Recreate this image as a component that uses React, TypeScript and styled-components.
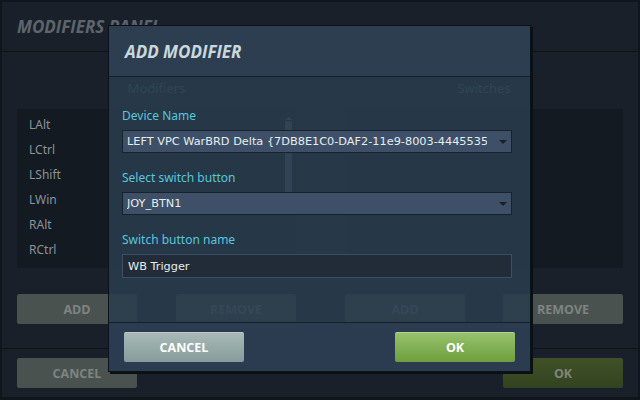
import React from 'react';
import styled, { createGlobalStyle } from 'styled-components';

const GlobalStyle = createGlobalStyle`
  html, body {
    margin: 0;
    padding: 0;
    background: #11161c;
    overflow: hidden;
  }
  * {
    box-sizing: border-box;
  }
`;

const MODIFIERS = ['LAlt', 'LCtrl', 'LShift', 'LWin', 'RAlt', 'RCtrl'];
const DEVICE = 'LEFT VPC WarBRD Delta {7DB8E1C0-DAF2-11e9-8003-444553540000}';

function App() {
  return (
    <Screen>
      <GlobalStyle />
      <Panel>
        <PanelHeader>
          <PanelTitle>MODIFIERS PANEL</PanelTitle>
        </PanelHeader>
        <PanelBody>
          <Column>
            <ColumnTitle>Modifiers</ColumnTitle>
            <ListBox>
              {MODIFIERS.map((m) => (
                <ListItem key={m}>{m}</ListItem>
              ))}
              <ScrollBar>
                <ScrollArrow />
                <ScrollThumb />
              </ScrollBar>
            </ListBox>
            <ButtonRow>
              <GhostButton>ADD</GhostButton>
              <GhostButton>REMOVE</GhostButton>
            </ButtonRow>
          </Column>
          <Column>
            <ColumnTitle>Switches</ColumnTitle>
            <ListBox />
            <ButtonRow>
              <GhostButton>ADD</GhostButton>
              <GhostButton>REMOVE</GhostButton>
            </ButtonRow>
          </Column>
        </PanelBody>
        <PanelFooter>
          <GhostButton>CANCEL</GhostButton>
          <GhostButton $ok>OK</GhostButton>
        </PanelFooter>
      </Panel>

      <Modal>
        <ModalHeader>
          <ModalTitle>ADD MODIFIER</ModalTitle>
        </ModalHeader>
        <ModalBody>
          <Field>
            <Label>Device Name</Label>
            <Select>
              <SelectText>{DEVICE}</SelectText>
              <Caret />
            </Select>
          </Field>
          <Field>
            <Label>Select switch button</Label>
            <Select>
              <SelectText>JOY_BTN1</SelectText>
              <Caret />
            </Select>
          </Field>
          <Field>
            <Label>Switch button name</Label>
            <Input defaultValue="WB Trigger" />
          </Field>
        </ModalBody>
        <ModalFooter>
          <ActionButton>CANCEL</ActionButton>
          <ActionButton $ok>OK</ActionButton>
        </ModalFooter>
      </Modal>
    </Screen>
  );
}

const Screen = styled.div`
  position: relative;
  width: 640px;
  height: 400px;
  padding: 2px 2px 3px 2px;
`;

const Panel = styled.div`
  display: flex;
  flex-direction: column;
  height: 100%;
  background: #19202a;
`;

const PanelHeader = styled.div`
  display: flex;
  align-items: center;
  height: 50px;
  padding-left: 15px;
  border-bottom: 1px solid #0e1318;
`;

const PanelTitle = styled.div`
  font-family: 'Open Sans', 'DejaVu Sans', sans-serif;
  font-size: 17px;
  font-weight: 700;
  font-style: italic;
  color: #5d656c;
`;

const PanelBody = styled.div`
  display: grid;
  grid-template-columns: 279px 278px;
  justify-content: space-between;
  height: 296px;
  padding: 27px 15px 0 15px;
`;

const Column = styled.div`
  display: flex;
  flex-direction: column;
`;

const ColumnTitle = styled.div`
  font-family: 'Noto Sans', sans-serif;
  font-size: 13px;
  line-height: 18px;
  text-align: center;
  color: #4a7f86;
`;

const ListBox = styled.div`
  position: relative;
  height: 159px;
  margin-top: 12px;
  padding-top: 3px;
  background: #131a22;
`;

const ListItem = styled.div`
  height: 25px;
  line-height: 25px;
  padding-left: 12px;
  font-family: 'Noto Sans', sans-serif;
  font-size: 12px;
  color: #8c9297;
`;

const ScrollBar = styled.div`
  position: absolute;
  top: 8px;
  right: 4px;
  width: 7px;
  display: flex;
  flex-direction: column;
  align-items: center;
`;

const ScrollArrow = styled.div`
  width: 0;
  height: 0;
  border-left: 3px solid transparent;
  border-right: 3px solid transparent;
  border-bottom: 3px solid #6f8396;
`;

const ScrollThumb = styled.div`
  width: 7px;
  height: 72px;
  margin-top: 1px;
  background: #5f7185;
`;

const ButtonRow = styled.div`
  display: flex;
  justify-content: space-between;
  margin-top: 26px;
`;

const GhostButton = styled.div<{ $ok?: boolean }>`
  display: flex;
  align-items: center;
  justify-content: center;
  width: 120px;
  height: 30px;
  border-radius: 2px;
  font-family: 'Open Sans', 'DejaVu Sans', sans-serif;
  font-size: 12.5px;
  font-weight: 700;
  color: ${(p) => (p.$ok ? '#7f857c' : '#7e8481')};
  background: ${(p) =>
    p.$ok ? 'linear-gradient(#405129, #33431f)' : '#4a5250'};
`;

const PanelFooter = styled.div`
  display: flex;
  align-items: center;
  justify-content: space-between;
  flex: 1;
  padding: 0 15px;
  border-top: 1px solid #0e1318;
`;

const Modal = styled.div`
  position: absolute;
  left: 108px;
  top: 25px;
  width: 423px;
  display: flex;
  flex-direction: column;
  border: 1px solid #0d1217;
  box-shadow: 2px 2px 0 #0b1015;
`;

const ModalHeader = styled.div`
  display: flex;
  align-items: center;
  height: 51px;
  padding-left: 16px;
  background: #2d3e51;
  border-bottom: 1px solid #172029;
`;

const ModalTitle = styled.div`
  font-family: 'Open Sans', 'DejaVu Sans', sans-serif;
  font-size: 17px;
  font-weight: 700;
  font-style: italic;
  color: #c9d8dc;
`;

const ModalBody = styled.div`
  display: flex;
  flex-direction: column;
  gap: 17px;
  height: 245px;
  padding: 31px 18px 0 13px;
  background: rgba(42, 60, 78, 0.86);
`;

const Field = styled.div`
  display: flex;
  flex-direction: column;
`;

const Label = styled.div`
  font-family: 'Noto Sans', sans-serif;
  font-size: 12px;
  line-height: 16px;
  margin-bottom: 6px;
  color: #58c6de;
`;

const Select = styled.div`
  display: flex;
  align-items: center;
  height: 23px;
  padding: 0 4px 0 4px;
  background: #3d5068;
  border: 1px solid #18222c;
`;

const SelectText = styled.div`
  flex: 1;
  overflow: hidden;
  white-space: nowrap;
  margin-right: 12px;
  font-family: 'DejaVu Sans', sans-serif;
  font-size: 11.3px;
  color: #e6ecef;
`;

const Caret = styled.div`
  width: 0;
  height: 0;
  border-left: 4px solid transparent;
  border-right: 4px solid transparent;
  border-top: 4px solid #1a2028;
`;

const Input = styled.input`
  height: 24px;
  padding: 0 5px;
  margin: 0;
  background: #222c38;
  border: 1px solid #3b4f66;
  outline: none;
  font-family: 'DejaVu Sans', sans-serif;
  font-size: 11.3px;
  color: #e6ecef;
`;

const ModalFooter = styled.div`
  display: flex;
  align-items: center;
  justify-content: space-between;
  height: 49px;
  padding: 0 15px 0 15px;
  background: #2c3c50;
  border-top: 1px solid #172029;
`;

const ActionButton = styled.div<{ $ok?: boolean }>`
  display: flex;
  align-items: center;
  justify-content: center;
  width: 120px;
  height: 30px;
  border-radius: 2px;
  font-family: 'Open Sans', 'DejaVu Sans', sans-serif;
  font-size: 12.5px;
  font-weight: 700;
  color: #ffffff;
  background: ${(p) =>
    p.$ok
      ? 'linear-gradient(#98c36f, #6e9e3d)'
      : 'linear-gradient(#aabab8, #869c9a)'};
  box-shadow: inset 0 1px 0 rgba(255, 255, 255, 0.25);
`;

export default App;
